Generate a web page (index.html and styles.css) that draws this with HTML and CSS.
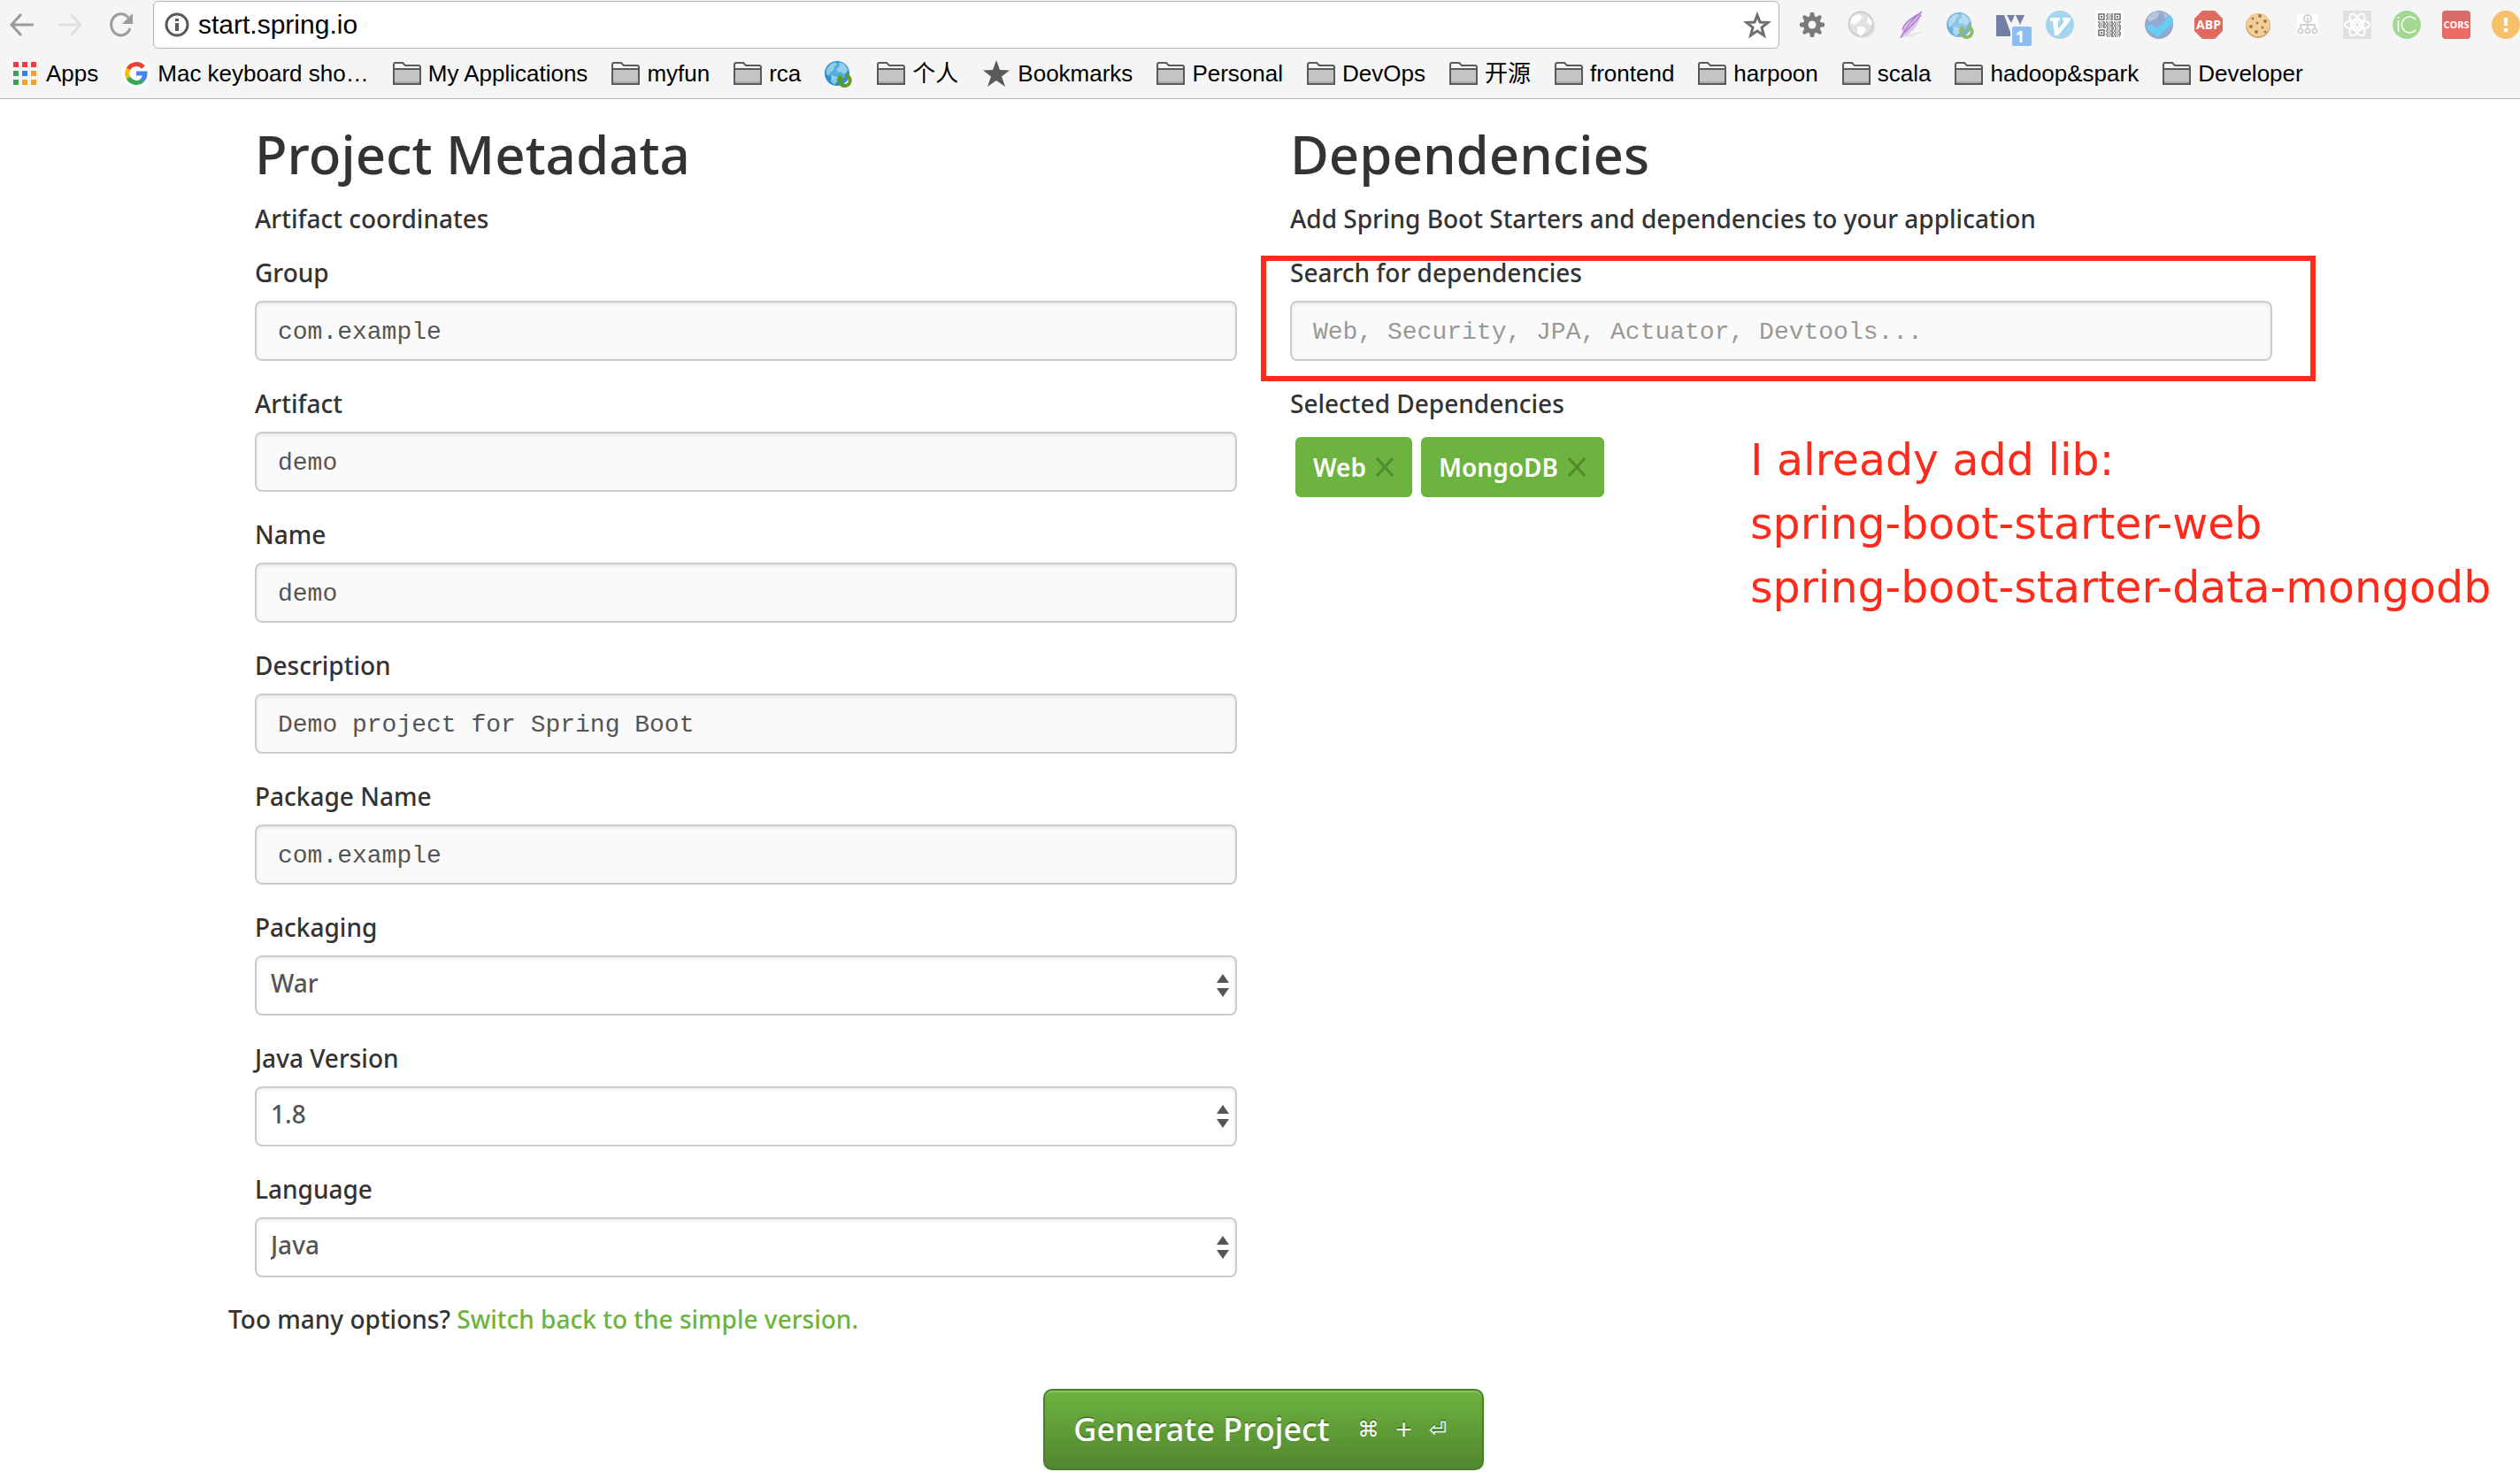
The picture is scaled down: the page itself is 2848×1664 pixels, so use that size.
FILE: index.html
```html
<!DOCTYPE html>
<html lang="en">
<head>
<meta charset="utf-8">
<title>Spring Initializr</title>
<link rel="stylesheet" href="styles.css">
</head>
<body>
<svg class="defs" aria-hidden="true">
  <symbol id="folder" viewBox="0 0 32 32">
    <path d="M1 28V6q0-2 2-2h8l3 3h15q2 0 2 2v19z" fill="#f5f5f5" stroke="#5a5a5a" stroke-width="2"/>
    <path d="M2 12h28v15H2z" fill="#c4c4c4"/><path d="M2 25h28v3H2z" fill="#ababab"/>
    <path d="M1 11h30v15q0 2-2 2H3q-2 0-2-2z" fill="none" stroke="#5a5a5a" stroke-width="2"/>
  </symbol>
  <symbol id="globe" viewBox="0 0 32 32">
    <circle cx="14" cy="16" r="14" fill="#2b8fd0"/>
    <circle cx="15" cy="14" r="10" fill="#53aee0"/>
    <path d="M2 11l5-6 5-2 2 3-3 2-1 4-4 3-1 4-3-2zM16 3l6 2 5 7-5 5-4-3-3 1-2-4 4-3zM8 18l6 2 1 4-4 5-4-4z" fill="#a9daf2" opacity=".75"/>
    <path d="M17 19v7a6 6 0 1 0 6-8" fill="none" stroke="#5e9c1d" stroke-width="4"/>
    <path d="M13 24l4-7 5 6z" fill="#5e9c1d"/>
  </symbol>
</svg>

<header class="browser">
  <div class="toolbar">
    <nav class="nav" aria-label="History">
      <button aria-label="Back"><svg viewBox="0 0 32 32"><path d="M30 16H6M16 4L5 16l11 12" fill="none" stroke="#9b9b9b" stroke-width="3"/></svg></button>
      <button aria-label="Forward"><svg viewBox="0 0 32 32"><path d="M2 16h24M16 4l11 12-11 12" fill="none" stroke="#e0e0e0" stroke-width="3"/></svg></button>
      <button aria-label="Reload"><svg viewBox="0 0 32 32"><path d="M25 8A11 12 0 1 0 27 20" fill="none" stroke="#9b9b9b" stroke-width="3"/><path d="M30 3v12H18z" fill="#9b9b9b"/></svg></button>
    </nav>
    <div class="address">
      <svg viewBox="0 0 32 32"><circle cx="16" cy="16" r="12" fill="none" stroke="#5a5a5a" stroke-width="3"/><path d="M14 14h4v9h-4zM14 9h4v3h-4z" fill="#5a5a5a"/></svg>
      <input type="text" aria-label="Address" value="start.spring.io">
      <button aria-label="Bookmark this page"><svg viewBox="0 0 32 32"><path d="M16 5l3 8 9 .5-7 5.500 2.500 9L16 23l-7.500 5 2.500-9-7-5.500 9-.5z" fill="none" stroke="#6e6e6e" stroke-width="3"/></svg></button>
    </div>
    <div class="extensions">
      <svg viewBox="0 0 32 32"><g fill="#7a7a7a"><circle cx="16" cy="16" r="10"/><path d="M13 7l1-5h4l1 5zM13 25l1 5h4l1-5zM7 13l-5 1v4l5 1zM25 13l5 1v4l-5 1zM7.500 12L5 7l2-2 5 2.500zM24.500 12L27 7l-2-2-5 2.500zM7.500 20L5 25l2 2 5-2.500zM24.500 20l2.500 5-2 2-5-2.500z"/></g><circle cx="16" cy="16" r="4.500" fill="#f5f5f5"/></svg>
      <svg viewBox="0 0 32 32"><ellipse cx="17" cy="18" rx="14" ry="13" fill="#dedede"/><circle cx="15" cy="15" r="14.500" fill="#cfcfcf"/><circle cx="15" cy="15" r="12.500" fill="#e2e2e2"/><path d="M5 7l8-3 4 3-4 5-5 4-5-2zM11 18l7 0 3 4-6 7-4-4zM23 7l5 5-1 5-5-3z" fill="#fff"/></svg>
      <svg viewBox="0 0 32 32"><path d="M6 30l10-4 14-2-13 5z" fill="#e2e2e2"/><path d="M28 1Q8 10 4 31q20-8 24-30z" fill="#dcc3ea"/><path d="M28 1Q12 14 4 31M27 3Q8 12 6 22M27 5Q16 18 8 25" fill="none" stroke="#b07fce" stroke-width="1.500"/></svg>
      <svg viewBox="0 0 32 32" opacity=".65"><use href="#globe"/></svg>
      <svg viewBox="0 0 40 40" class="wide"><path d="M0 5h9l7 19v5H0z" fill="#7380a6"/><path d="M12 5h9l-4 9zM22 5h10l-5 11z" fill="#7380a6"/><rect x="18" y="18" width="22" height="22" rx="2" fill="#8dbcf5"/><text x="27" y="36" class="badge">1</text></svg>
      <svg viewBox="0 0 32 32"><circle cx="16" cy="16" r="16" fill="#a5d5ee"/><path d="M5 8h11v3l-2 1v9l7-9-2-1V8h9v3l-14 17h-4L8 12H5z" fill="#fff"/></svg>
      <svg viewBox="0 0 32 32"><path d="M0 0h32v32H0z" fill="#fff"/><g fill="none" stroke="#6e6e6e" stroke-width="1.500"><path d="M4 4h6v6H4zM22 4h6v6h-6zM4 22h6v6H4z"/><path d="M6 7h2M24 7h2M6 25h2" stroke-width="2"/><path stroke-dasharray="2 1 1 1 3 1" d="M13 4h7M12 6h8M13 8h7M12 10h8M3 13h26M4 15h24M3 17h26M4 19h25M13 21h16M12 23h16M13 25h16M12 27h17M13 29h15"/></g></svg>
      <svg viewBox="0 0 32 32"><circle cx="16" cy="16" r="16" fill="#94a9cf"/><path d="M3 8l8-7 6 1-4 7-8 4zM20 2l7 4-4 3z" fill="#b4c5dd"/><path d="M1 19l6-4 6 5L29 5l3 5v4L14 30z" fill="#67cdf5"/></svg>
      <svg viewBox="0 0 32 32"><path d="M9 0h14l9 9v14l-9 9H9l-9-9V9z" fill="#e16a60"/><text x="16" y="21" class="abp">ABP</text></svg>
      <svg viewBox="0 0 32 32"><circle cx="16" cy="17" r="14" fill="#d7a96b"/><circle cx="16" cy="16" r="13" fill="#f2cf98"/><g fill="#a97843"><circle cx="10" cy="9" r="1.500"/><circle cx="18" cy="6" r="2"/><circle cx="24" cy="12" r="2"/><circle cx="15" cy="14" r="1.500"/><circle cx="8" cy="18" r="2"/><circle cx="21" cy="19" r="1.500"/><circle cx="14" cy="24" r="2"/><circle cx="24" cy="24" r="1.500"/></g></svg>
      <svg viewBox="0 0 32 32"><rect x="4" y="4" width="24" height="24" rx="4" fill="#fff"/><g fill="none" stroke="#d2d2d2" stroke-width="2"><circle cx="16" cy="9" r="4"/><path d="M16 8v12M8 20v-4h16v4"/><circle cx="8" cy="23" r="2.500"/><circle cx="16" cy="23" r="2.500"/><circle cx="24" cy="23" r="2.500"/></g></svg>
      <svg viewBox="0 0 32 32"><path d="M0 0h32v32H0z" fill="#e1e1e1"/><g fill="none" stroke="#fff" stroke-width="2"><ellipse cx="16" cy="16" rx="14" ry="5.500"/><ellipse cx="16" cy="16" rx="14" ry="5.500" transform="rotate(60 16 16)"/><ellipse cx="16" cy="16" rx="14" ry="5.500" transform="rotate(120 16 16)"/><circle cx="16" cy="16" r="3"/></g></svg>
      <svg viewBox="0 0 32 32"><circle cx="16" cy="16" r="16" fill="#a3d993"/><path d="M6.500 11v13M6.500 7v2M26 10a9 9 0 1 0 0 12" fill="none" stroke="#fff" stroke-width="1.500"/></svg>
      <svg viewBox="0 0 32 32"><rect width="32" height="32" rx="4" fill="#d96a6a"/><path d="M1 14h30v14q0 3-3 3H4q-3 0-3-3z" fill="#ee6a64"/><text x="16" y="20" class="cors">CORS</text></svg>
      <svg viewBox="0 0 32 32"><circle cx="16" cy="16" r="16" fill="#f7c06b"/><path d="M14 8h4v9h-4zM14 20h4v4h-4z" fill="#fff"/></svg>
    </div>
  </div>
  <nav class="bookmarks" aria-label="Bookmarks">
    <a href="#"><svg viewBox="0 0 32 32"><path d="M3 3h6v6H3zM13 3h6v6h-6zM23 3h6v6h-6z" fill="#f23b3b"/><path d="M3 13h6v6H3zM3 23h6v6H3z" fill="#3a9d58"/><path d="M13 13h6v6h-6z" fill="#2d85f0"/><path d="M23 13h6v6h-6zM13 23h6v6h-6zM23 23h6v6h-6z" fill="#f0a028"/></svg>Apps</a>
    <a href="#"><svg viewBox="0 0 32 32"><circle cx="16" cy="16" r="16" fill="#fff"/><g fill="none" stroke-width="5"><path d="M24 9A10.500 10.500 0 0 0 7 11" stroke="#ea4335"/><path d="M7 11a11 11 0 0 0 0 10" stroke="#fbbc05"/><path d="M7 21a10.500 10.500 0 0 0 16 3" stroke="#34a853"/><path d="M16 16h10q0 5-3.500 8" stroke="#4285f4"/></g></svg>Mac keyboard sho…</a>
    <a href="#"><svg><use href="#folder"/></svg>My Applications</a>
    <a href="#"><svg><use href="#folder"/></svg>myfun</a>
    <a href="#"><svg><use href="#folder"/></svg>rca</a>
    <a href="#" aria-label="Globe"><svg><use href="#globe"/></svg></a>
    <a href="#"><svg><use href="#folder"/></svg>个人</a>
    <a href="#"><svg viewBox="0 0 32 32"><path d="M16 1l4 11 11 .5-9 7L26 31l-10-7-10 7 4-11.500-9-7L12 12z" fill="#5a5a5a"/></svg>Bookmarks</a>
    <a href="#"><svg><use href="#folder"/></svg>Personal</a>
    <a href="#"><svg><use href="#folder"/></svg>DevOps</a>
    <a href="#"><svg><use href="#folder"/></svg>开源</a>
    <a href="#"><svg><use href="#folder"/></svg>frontend</a>
    <a href="#"><svg><use href="#folder"/></svg>harpoon</a>
    <a href="#"><svg><use href="#folder"/></svg>scala</a>
    <a href="#"><svg><use href="#folder"/></svg>hadoop&amp;spark</a>
    <a href="#"><svg><use href="#folder"/></svg>Developer</a>
  </nav>
</header>

<main>
  <form>
    <div class="columns">
      <section>
        <h1>Project Metadata</h1>
        <p class="intro">Artifact coordinates</p>
        <div class="field"><label for="group">Group</label><input id="group" type="text" value="com.example"></div>
        <div class="field"><label for="artifact">Artifact</label><input id="artifact" type="text" value="demo"></div>
        <div class="field"><label for="name">Name</label><input id="name" type="text" value="demo"></div>
        <div class="field"><label for="description">Description</label><input id="description" type="text" value="Demo project for Spring Boot"></div>
        <div class="field"><label for="package">Package Name</label><input id="package" type="text" value="com.example"></div>
        <div class="field"><label for="packaging">Packaging</label>
          <div class="choice"><select id="packaging"><option>War</option><option>Jar</option></select><svg viewBox="0 0 14 26"><path d="M7 0l7 10H0zM7 26l7-10H0z" fill="#555"/></svg></div></div>
        <div class="field"><label for="java">Java Version</label>
          <div class="choice"><select id="java"><option>1.8</option><option>1.7</option></select><svg viewBox="0 0 14 26"><path d="M7 0l7 10H0zM7 26l7-10H0z" fill="#555"/></svg></div></div>
        <div class="field"><label for="language">Language</label>
          <div class="choice"><select id="language"><option>Java</option><option>Groovy</option></select><svg viewBox="0 0 14 26"><path d="M7 0l7 10H0zM7 26l7-10H0z" fill="#555"/></svg></div></div>
      </section>
      <section class="dependencies">
        <h1>Dependencies</h1>
        <p class="intro">Add Spring Boot Starters and dependencies to your application</p>
        <div class="field highlighted"><label for="search">Search for dependencies</label><input id="search" type="text" placeholder="Web, Security, JPA, Actuator, Devtools..."></div>
        <h2>Selected Dependencies</h2>
        <div class="tags">
          <button type="button">Web<svg viewBox="0 0 22 22"><path d="M2 1l18 20M20 1L2 21" stroke="#528a2e" stroke-width="3"/></svg></button>
          <button type="button">MongoDB<svg viewBox="0 0 22 22"><path d="M2 1l18 20M20 1L2 21" stroke="#528a2e" stroke-width="3"/></svg></button>
        </div>
        <div class="note">I already add lib:<br>spring-boot-starter-web<br>spring-boot-starter-data-mongodb</div>
      </section>
    </div>
    <p class="switch">Too many options? <a href="#">Switch back to the simple version.</a></p>
    <div class="actions"><button type="submit" class="generate">Generate Project <span class="keys"><kbd>⌘</kbd><kbd>+</kbd><kbd>⏎</kbd></span></button></div>
  </form>
</main>
</body>
</html>
```
FILE: styles.css
```css
*, *::after { box-sizing: border-box; }
body { margin: 0; overflow-x: hidden; background: #fff; color: #333; font: 500 28px/40px "Noto Sans", "Open Sans", sans-serif; }
button, input, select { font: inherit; color: inherit; margin: 0; }
svg { display: block; flex: none; }
.defs { position: absolute; width: 0; height: 0; }

/* browser chrome */
.browser { height: 112px; background: #f5f5f5; border-bottom: 1px solid #b4b4b4; color: #000; font-family: "Liberation Sans", "Noto Sans CJK SC", sans-serif; font-weight: 400; }
.browser svg { width: 32px; height: 32px; }
.toolbar { display: flex; align-items: center; height: 56px; }
.nav { display: flex; gap: 24px; padding: 0 21px 0 8px; }
.toolbar button { padding: 0; border: 0; background: none; }
.address { flex: 1; display: flex; align-items: center; height: 54px; padding: 0 8px 0 10px; background: #fff; border: 1px solid #b4b4b4; border-radius: 6px; }
.address input { flex: 1; min-width: 0; padding: 0 8px; border: 0; background: none; outline: 0; font-size: 30px; }
.extensions { display: flex; align-items: flex-start; gap: 24px; height: 32px; padding-left: 21px; }
.browser .wide { width: 40px; height: 40px; margin-right: -8px; }
.toolbar svg text { fill: #fff; text-anchor: middle; font-weight: 700; font-family: "Open Sans", sans-serif; }
.toolbar svg .badge { font-size: 18px; }
.toolbar svg .abp { font-size: 14px; }
.toolbar svg .cors { font-size: 11px; }
.bookmarks { display: flex; align-items: center; gap: 27px; height: 54px; padding-left: 12px; font-size: 26px; white-space: nowrap; }
.bookmarks a { display: flex; align-items: center; gap: 8px; color: #000; text-decoration: none; }

/* project form */
main { padding: 29px 280px 0 288px; }
.columns { display: grid; grid-template-columns: 1fr 1fr; gap: 60px; }
h1 { margin: 0 0 20px; font-size: 60px; line-height: 66px; font-weight: 500; }
.intro { margin: 0 0 20px; }
.field { margin-bottom: 27px; }
label, h2 { display: block; margin: 0 0 11px; font-size: 28px; line-height: 42px; font-weight: 500; }
.field input, select { display: block; width: 100%; height: 68px; border: 2px solid #ccc; border-radius: 8px; color: #555; box-shadow: inset 0 2px 4px rgba(0, 0, 0, .08); }
.field input { padding: 3px 24px 0; background: #fafafa; font-family: "Courier New", "Liberation Mono", monospace; }
.field input::placeholder { color: #999; opacity: 1; }
select { appearance: none; padding: 0 40px 6px 16px; background: #fff; }
.choice { position: relative; }
.choice svg { position: absolute; right: 9px; top: 21px; width: 14px; height: 26px; }
.dependencies { position: relative; }
.highlighted { position: relative; }
.highlighted::after { content: ""; position: absolute; top: 2px; left: -33px; right: -49px; height: 142px; border: 6px solid #ff2a1a; pointer-events: none; }
.tags { display: flex; gap: 10px; padding: 6px; }
.tags button { display: flex; align-items: center; gap: 10px; height: 68px; padding: 0 20px; border: 0; border-radius: 6px; background: #6db33f; color: #fff; font-weight: 600; }
.tags svg { width: 22px; height: 22px; }
.note { position: absolute; top: 344px; left: 520px; color: #ff2a1a; font: 49px/72px "DejaVu Sans", sans-serif; white-space: nowrap; }
.switch { margin: 0 0 59px -30px; }
.switch a { color: #6db33f; text-decoration: none; }
.actions { text-align: center; }
.generate { display: inline-flex; align-items: center; gap: 32px; height: 92px; padding: 0 40px 0 32px; border: 2px solid #4a7f29; border-radius: 10px; background: linear-gradient(#6db33f, #52872f); box-shadow: inset 0 2px 0 rgba(255, 255, 255, .2), 0 2px 4px rgba(0, 0, 0, .1); color: #fff; font-size: 36px; text-shadow: 0 -2px 0 rgba(0, 0, 0, .25); }
.keys { display: flex; gap: 18px; }
kbd { font: 24px "DejaVu Sans", sans-serif; }
```
